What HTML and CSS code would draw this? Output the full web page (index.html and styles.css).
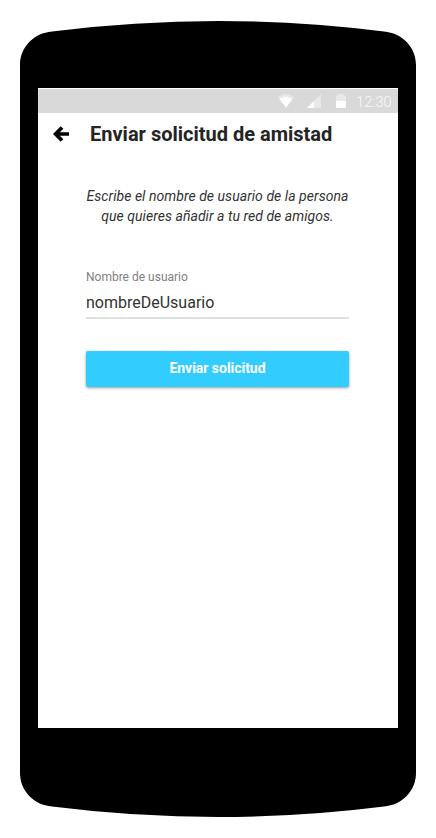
FILE: index.html
```html
<!DOCTYPE html>
<html lang="es">
<head>
<meta charset="utf-8">
<title>Enviar solicitud de amistad</title>
<link rel="stylesheet" href="styles.css">
</head>
<body>
<div class="phone">
  <svg class="phone-body" viewBox="0 0 436 838" aria-hidden="true">
    <path d="M20 65C20 47 34 33 52 31.5Q135 21 218 21Q301 21 384 31.5C402 33 416 47 416 65V773C416 791 402 805 384 806.500Q301 817 218 817Q135 817 52 806.500C34 805 20 791 20 773Z"/>
  </svg>
  <main class="screen">
    <div class="status-bar">
      <svg class="wifi" width="16" height="14" viewBox="0 0 16 14"><path fill="#e8e8e8" d="M0 3Q8-3 16 3L8 13.500Z"/><path fill="#fff" d="M1.500 5Q8 .8 14.500 5L8 13.500Z"/></svg>
      <svg class="signal" width="14" height="14" viewBox="0 0 14 14"><path fill="#e8e8e8" d="M0 14L14 0V14Z"/><path fill="#fff" d="M0 14L7 7V14Z"/></svg>
      <svg class="battery" width="10" height="14" viewBox="0 0 10 14"><path fill="#e8e8e8" d="M0 8V3Q0 1.500 2 1L3 0H7L8 1Q10 1.500 10 3V8Z"/><path fill="#fff" d="M0 7H10V13Q10 14 9 14H1Q0 14 0 13Z"/></svg>
      <span class="clock">12:30</span>
    </div>
    <header class="app-bar">
      <svg class="back" width="17" height="16" viewBox="0 0 17 16"><path d="M16 8H3M9 1.500L2.500 8L9 14.500" fill="none" stroke="#000" stroke-width="3.700"/></svg>
      <h1>Enviar solicitud de amistad</h1>
    </header>
    <div class="content">
      <p class="intro">Escribe el nombre de usuario de la persona<br>que quieres añadir a tu red de amigos.</p>
      <div class="field">
        <span class="label">Nombre de usuario</span>
        <span class="value">nombreDeUsuario</span>
      </div>
      <button class="submit" type="button">Enviar solicitud</button>
    </div>
  </main>
</div>
</body>
</html>
```
FILE: styles.css
```css
* { box-sizing: border-box; }
body { margin: 0; background: #fff; font-family: Roboto, "Liberation Sans", sans-serif; color: #242424; }
.phone { display: grid; width: 436px; height: 838px; }
.phone-body { grid-area: 1 / 1; width: 436px; height: 838px; }
.screen { grid-area: 1 / 1; z-index: 1; width: 360px; height: 640px; margin: 88px 0 0 38px; padding-top: 1px; background: #fff; }
.status-bar { display: flex; justify-content: flex-end; height: 24px; padding-right: 6px; background: #d9d9d9; }
.status-bar svg { margin-top: 5px; }
.wifi { margin-right: 13px; }
.signal { margin-right: 15px; }
.battery { margin-right: 10px; }
.clock { width: 36px; color: #f8f8f8; font-size: 14.700px; line-height: 26px; white-space: nowrap; font-weight: 300; }
.app-bar { display: flex; align-items: center; height: 42px; padding-left: 15px; }
.back { margin-right: 20px; }
h1 { margin: 0; font-size: 20px; line-height: 24px; font-weight: 700; white-space: nowrap; }
.content { display: flex; flex-direction: column; width: 263px; margin: 31px 0 0 48px; }
.intro { margin: 0; color: #333; font-size: 14px; line-height: 20px; font-style: italic; text-align: center; white-space: nowrap; letter-spacing: .045px; }
.field { display: flex; flex-direction: column; height: 53px; margin-top: 40px; border-bottom: 2px solid #e0e0e0; }
.label { color: #808080; font-size: 12px; line-height: 22px; }
.value { color: #333; font-size: 16px; line-height: 29px; }
.submit { height: 36px; margin-top: 32px; padding: 0 0 2px; border: 0; border-radius: 2px; background: #3cf; color: #fff; font: 700 14px/20px Roboto, sans-serif; letter-spacing: -.03px; box-shadow: 0 1px 3px rgba(0, 0, 0, .4); }
```
